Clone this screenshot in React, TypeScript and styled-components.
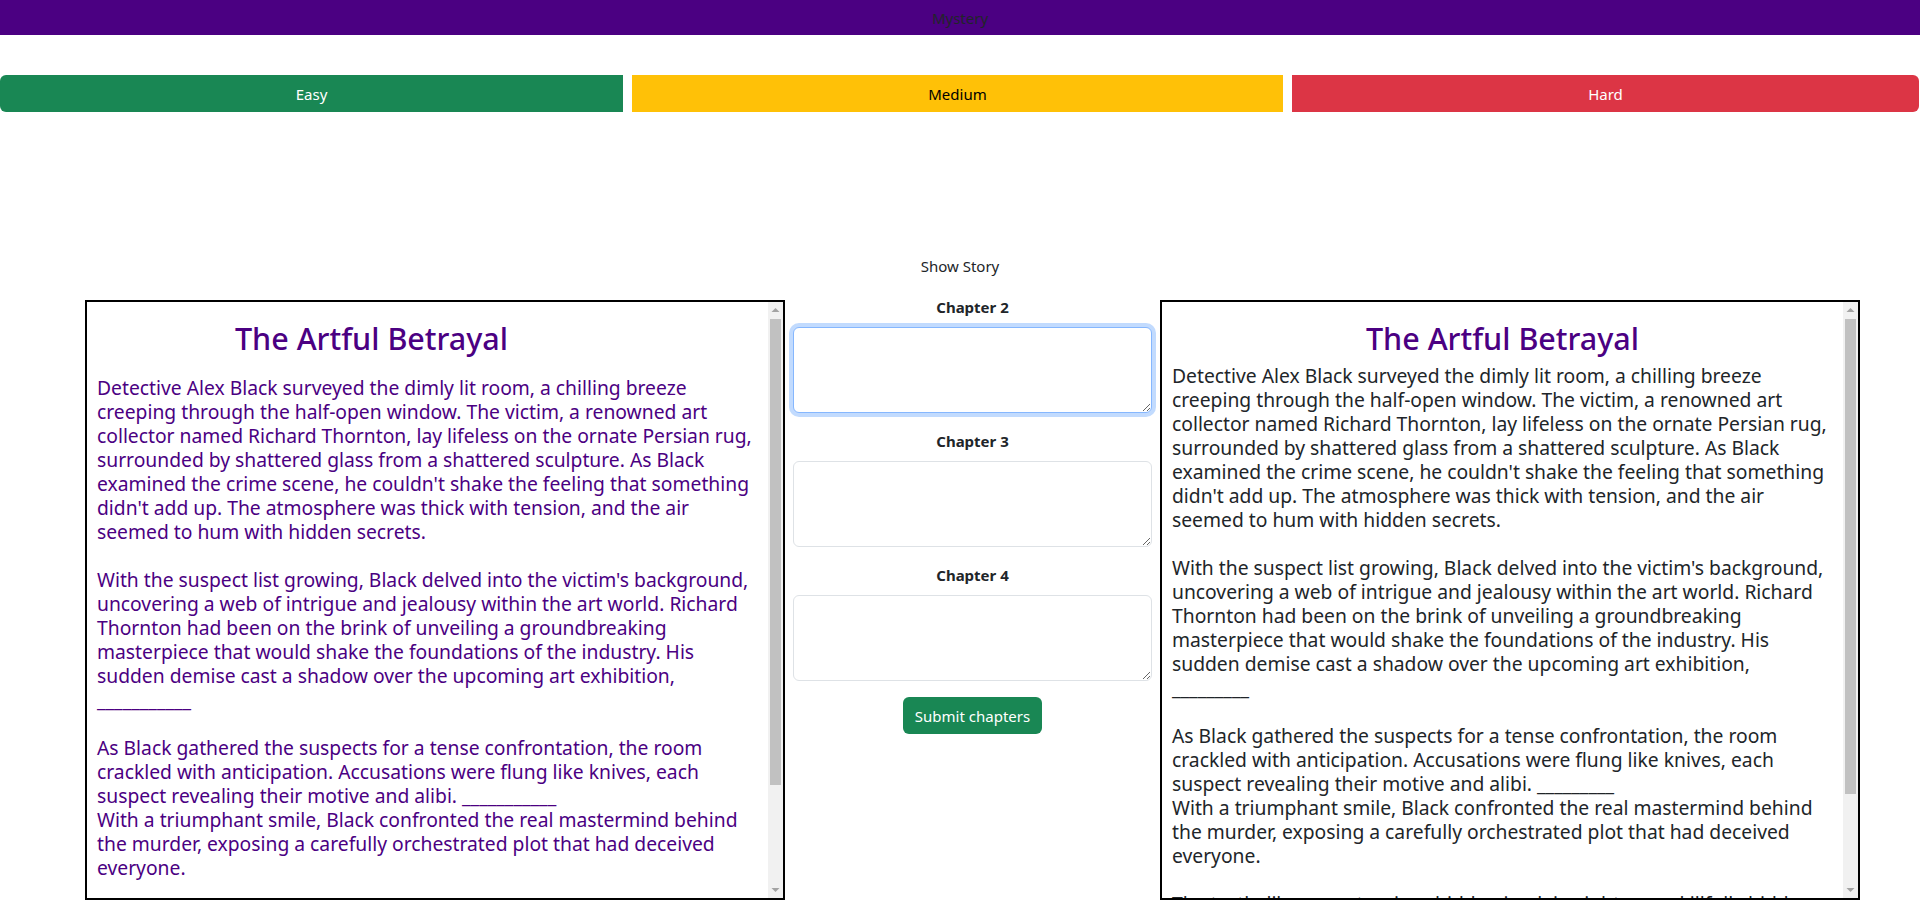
import styled, { createGlobalStyle, css } from 'styled-components';

const GlobalStyle = createGlobalStyle`
    body {
        margin: 0;
        font-family: "Noto Sans", "Open Sans", sans-serif;
        color: #212529;
        background: #fff;
    }
`;

const Navbar = styled.div`
    height: 35px;
    background-color: #4b0082;
    display: flex;
    justify-content: center;
    align-items: center;
    font-size: 15px;
    color: #212529;
`;

const LevelRow = styled.div`
    margin-top: 40px;
    display: grid;
    grid-template-columns: 623px 651px 627px;
    column-gap: 9px;
`;

const LevelButton = styled.button<{ $bg: string; $fg: string; $pos: 'first' | 'mid' | 'last' }>`
    height: 37px;
    border: 0;
    font-family: inherit;
    font-size: 15px;
    background-color: ${(p) => p.$bg};
    color: ${(p) => p.$fg};
    border-radius: ${(p) => (p.$pos === 'first' ? '6px 0 0 6px' : p.$pos === 'last' ? '0 6px 6px 0' : '0')};
    cursor: pointer;
`;

const ShowStory = styled.div`
    margin-top: 142px;
    text-align: center;
    line-height: 24px;
    font-size: 15px;
`;

const Board = styled.div`
    margin-top: 17px;
    padding-left: 85px;
    display: grid;
    grid-template-columns: 700px 359px 700px;
    column-gap: 8px;
    align-items: start;
`;

const StoryPanel = styled.div<{ $color: string }>`
    margin-top: 5px;
    height: 600px;
    box-sizing: border-box;
    border: 2px solid #000;
    display: flex;
    overflow: hidden;
    color: ${(p) => p.$color};
`;

const StoryBody = styled.div`
    flex: 1;
    min-width: 0;
    padding: 10px;
    overflow: hidden;
`;

/* 스크롤바 (headless 에서는 기본 스크롤바가 안 보여서 직접 그림) */
const ScrollBar = styled.div`
    width: 15px;
    flex-shrink: 0;
    display: flex;
    flex-direction: column;
    background: #f1f1f1;
`;

const ScrollArrow = styled.svg`
    display: block;
    width: 15px;
    height: 17px;
    flex-shrink: 0;
`;

const ScrollTrack = styled.div`
    flex: 1;
    padding: 0 2px;
`;

const ScrollThumb = styled.div<{ $size: number }>`
    height: ${(p) => p.$size}px;
    background: #c1c1c1;
`;

const StoryTitle = styled.h1<{ $gap: number; $shift: number }>`
    margin: 7px 0 ${(p) => p.$gap}px 0;
    padding-right: ${(p) => p.$shift}px;
    font-size: 30.5px;
    line-height: 38px;
    font-weight: 500;
    text-align: center;
    color: #4b0082;
`;

const StoryText = styled.div`
    white-space: pre;
    font-size: 19.3px;
    line-height: 24px;
`;

const ChapterColumn = styled.div`
    display: flex;
    flex-direction: column;
    align-items: center;
`;

const ChapterLabel = styled.label`
    font-weight: 700;
    font-size: 15px;
    line-height: 24px;
    margin-bottom: 8px;
`;

const ChapterInput = styled.textarea<{ $focused?: boolean }>`
    width: 359px;
    height: 86px;
    box-sizing: border-box;
    margin: 0 0 16px 0;
    padding: 6px 12px;
    font-family: inherit;
    font-size: 15px;
    border: 1px solid #dee2e6;
    border-radius: 6px;
    resize: vertical;
    outline: none;

    ${(p) =>
        p.$focused &&
        css`
            border-color: #86b7fe;
            box-shadow: 0 0 0 4px rgba(13, 110, 253, 0.25);
        `}
`;

const SubmitButton = styled.button`
    width: 139px;
    height: 37px;
    border: 0;
    border-radius: 6px;
    background-color: #198754;
    color: #fff;
    font-family: inherit;
    font-size: 15px;
    cursor: pointer;
`;

const p1 = [
    'Detective Alex Black surveyed the dimly lit room, a chilling breeze',
    'creeping through the half-open window. The victim, a renowned art',
    'collector named Richard Thornton, lay lifeless on the ornate Persian rug,',
    'surrounded by shattered glass from a shattered sculpture. As Black',
    "examined the crime scene, he couldn't shake the feeling that something",
    "didn't add up. The atmosphere was thick with tension, and the air",
    'seemed to hum with hidden secrets.',
].join('\n');

const p2 = [
    "With the suspect list growing, Black delved into the victim's background,",
    'uncovering a web of intrigue and jealousy within the art world. Richard',
    'Thornton had been on the brink of unveiling a groundbreaking',
    'masterpiece that would shake the foundations of the industry. His',
    'sudden demise cast a shadow over the upcoming art exhibition,',
].join('\n');

const p3 = [
    'As Black gathered the suspects for a tense confrontation, the room',
    'crackled with anticipation. Accusations were flung like knives, each',
    'suspect revealing their motive and alibi.',
].join('\n');

const p4 = [
    'With a triumphant smile, Black confronted the real mastermind behind',
    'the murder, exposing a carefully orchestrated plot that had deceived',
    'everyone.',
].join('\n');

const p5 = [
    'The truth, like a masterpiece hidden in plain sight, was skillfully hidden',
    'behind the canvas, and Black pieced together the last of the clues.',
].join('\n');

const blankLong = '___________';
const blankShort = '_________';

const leftStory = `${p1}\n\n${p2}\n${blankLong}\n\n${p3} ${blankLong}\n${p4}`;
const rightStory = `${p1}\n\n${p2}\n${blankShort}\n\n${p3} ${blankShort}\n${p4}\n\n${p5}`;

function Scroll({ thumb }: { thumb: number }) {
    return (
        <ScrollBar>
            <ScrollArrow viewBox="0 0 15 17">
                <polygon points="3.5,10 11.5,10 7.5,6" fill="#a3a3a3" />
            </ScrollArrow>
            <ScrollTrack>
                <ScrollThumb $size={thumb} />
            </ScrollTrack>
            <ScrollArrow viewBox="0 0 15 17">
                <polygon points="3.5,7 11.5,7 7.5,11" fill="#a3a3a3" />
            </ScrollArrow>
        </ScrollBar>
    );
}

export default function App() {
    return (
        <>
            <GlobalStyle />
            <Navbar>Mystery</Navbar>

            <LevelRow>
                <LevelButton $bg="#198754" $fg="#fff" $pos="first">
                    Easy
                </LevelButton>
                <LevelButton $bg="#ffc107" $fg="#000" $pos="mid">
                    Medium
                </LevelButton>
                <LevelButton $bg="#dc3545" $fg="#fff" $pos="last">
                    Hard
                </LevelButton>
            </LevelRow>

            <ShowStory>Show Story</ShowStory>

            <Board>
                {/* 왼쪽: 빈칸이 있는 이야기 */}
                <StoryPanel $color="#4b0082">
                    <StoryBody>
                        <StoryTitle $gap={19} $shift={112}>
                            The Artful Betrayal
                        </StoryTitle>
                        <StoryText>{leftStory}</StoryText>
                    </StoryBody>
                    <Scroll thumb={466} />
                </StoryPanel>

                <ChapterColumn>
                    <ChapterLabel>Chapter 2</ChapterLabel>
                    <ChapterInput $focused autoFocus />
                    <ChapterLabel>Chapter 3</ChapterLabel>
                    <ChapterInput />
                    <ChapterLabel>Chapter 4</ChapterLabel>
                    <ChapterInput />
                    <SubmitButton>Submit chapters</SubmitButton>
                </ChapterColumn>

                {/* 오른쪽: 전체 이야기 */}
                <StoryPanel $color="#212529">
                    <StoryBody>
                        <StoryTitle $gap={7} $shift={0}>
                            The Artful Betrayal
                        </StoryTitle>
                        <StoryText>{rightStory}</StoryText>
                    </StoryBody>
                    <Scroll thumb={475} />
                </StoryPanel>
            </Board>
        </>
    );
}
